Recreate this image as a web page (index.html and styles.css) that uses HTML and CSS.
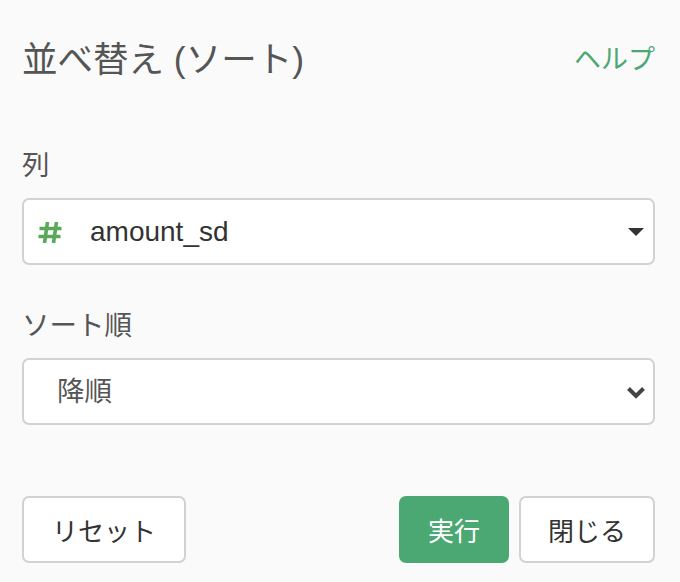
FILE: index.html
```html
<!DOCTYPE HTML>
<html>
    <head>
        <meta charset="utf-8">
        <link rel="stylesheet" href="styles.css">
    </head>
    <body>
        <div class="panel">
            <div class="header">
                <h1 class="title">並べ替え (ソート)</h1>
                <a class="help" href="#">ヘルプ</a>
            </div>

            <div class="field first">
                <label class="fieldLabel">列</label>
                <div class="select">
                    <svg class="typeIcon" width="24" height="21" viewBox="0 0 24 21">
                        <path d="M9.5 0 L6.5 21 M18.5 0 L15.5 21 M1.5 6.5 L23.5 6.5 M0.5 14.5 L22.5 14.5" fill="none" stroke="#5aa85a" stroke-width="3.6"/>
                    </svg>
                    <span class="value">amount_sd</span>
                    <svg class="caret" width="16" height="8" viewBox="0 0 16 8"><path d="M0 0 L16 0 L8 8 Z" fill="#333"/></svg>
                </div>
            </div>

            <div class="field">
                <label class="fieldLabel">ソート順</label>
                <div class="select plain">
                    <span class="value muted">降順</span>
                    <svg class="chevron" width="20" height="13" viewBox="0 0 20 13"><path d="M2.5 2.5 L10 10 L17.5 2.5" fill="none" stroke="#444" stroke-width="4"/></svg>
                </div>
            </div>

            <div class="footer">
                <button class="btn wide">リセット</button>
                <div class="actions">
                    <button class="btn primary">実行</button>
                    <button class="btn">閉じる</button>
                </div>
            </div>
        </div>
    </body>
</html>
```

FILE: styles.css
```css
html, body {
  margin: 0;
  background-color: #fafafa;
}

body {
  font-family: "Liberation Sans", "Noto Sans CJK JP", sans-serif;
  color: #555555;
}

.panel {
  padding: 40px 25px 0 22px;
}

.header {
  display: flex;
  justify-content: space-between;
  align-items: center;
  height: 40px;
}

.title {
  margin: 0;
  font-size: 35.5px;
  font-weight: normal;
  line-height: 40px;
  color: #555555;
}

.help {
  font-size: 27px;
  line-height: 40px;
  color: #4ba873;
  text-decoration: none;
}

.field {
  margin-top: 45px;
}

.field.first {
  margin-top: 70px;
}

.fieldLabel {
  display: block;
  font-size: 27.5px;
  line-height: 32px;
  margin-bottom: 16px;
  color: #555555;
}

.select {
  display: flex;
  align-items: center;
  height: 67px;
  box-sizing: border-box;
  background-color: #ffffff;
  border: 2px solid #d2d2d2;
  border-radius: 7px;
  padding: 0 9px 0 14px;
}

.select.plain {
  padding-left: 33px;
}

.typeIcon {
  margin-right: 28px;
  margin-top: 1px;
}

.value {
  flex: 1;
  font-size: 28px;
  color: #333333;
  line-height: 32px;
}

.value.muted {
  font-size: 27.5px;
  color: #555555;
}

.caret {
  margin-top: 1px;
}

.chevron {
  margin-right: -2px;
  margin-top: 1px;
}

.footer {
  display: flex;
  justify-content: space-between;
  margin-top: 71px;
}

.actions {
  display: flex;
  gap: 10px;
}

.btn {
  height: 67px;
  box-sizing: border-box;
  padding: 0 27px;
  font-family: inherit;
  font-size: 26px;
  color: #333333;
  background-color: #ffffff;
  border: 2px solid #d2d2d2;
  border-radius: 7px;
}

.btn.wide {
  padding: 0 28px;
}

.btn.primary {
  background-color: #4ba873;
  border-color: #4ba873;
  color: #ffffff;
}
```
